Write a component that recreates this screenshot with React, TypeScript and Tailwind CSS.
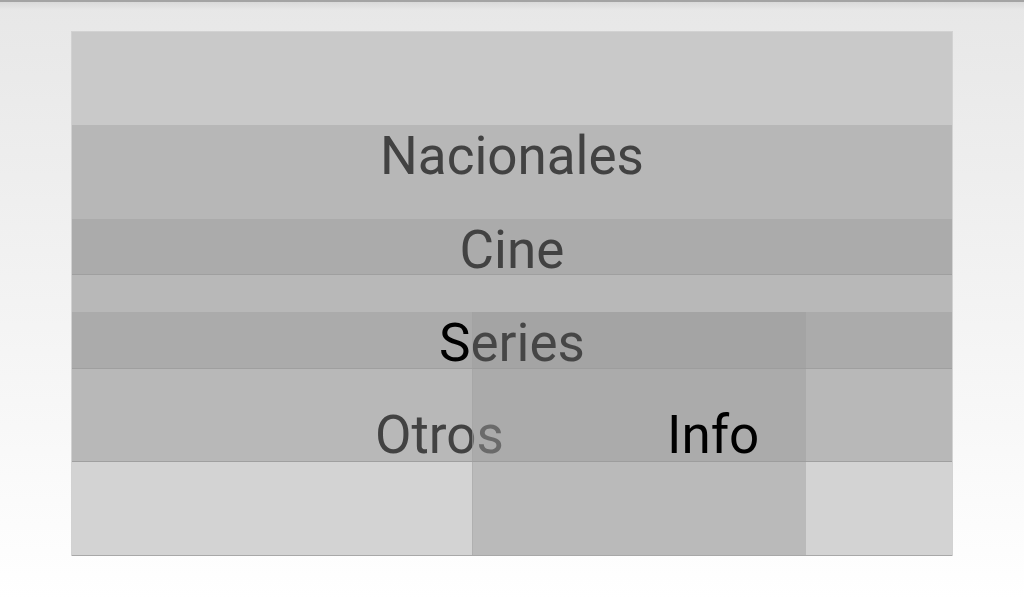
export default function App() {
  return (
    <div
      className="h-[600px] w-[1024px] overflow-hidden bg-gradient-to-b from-[#e7e7e7] to-[#ffffff]"
      style={{ fontFamily: 'Roboto, "Noto Sans", sans-serif' }}
    >
      {/* top edge shadow */}
      <div className="h-[2px] bg-[#a3a3a3]" />
      <div className="h-[8px] bg-gradient-to-b from-[#d9d9d9] to-[#e7e7e7]" />

      <div className="relative mx-auto mt-[21px] w-[882px] border-l border-r border-[#d2d2d2] text-[53px] leading-[63px] text-[#424242]">
        <div className="h-[94px] border-t border-[#d2d2d2] bg-[#c9c9c9]" />
        <div className="flex h-[94px] justify-center bg-[#b7b7b7]">
          <span>Nacionales</span>
        </div>
        <div className="flex h-[56px] justify-center border-b border-[#9f9f9f] bg-[#ababab]">
          <span>Cine</span>
        </div>
        <div className="h-[37px] bg-[#b8b8b8]" />
        <div className="flex h-[57px] justify-center border-b border-[#9f9f9f] bg-[#ababab]">
          <span className="text-black">Series</span>
        </div>
        <div className="h-[93px] border-b border-[#9f9f9f] bg-[#b8b8b8] pl-[303px] pt-[35px]">
          <span>Otros</span>
        </div>
        <div className="h-[94px] border-b border-[#a8a8a8] bg-[#d3d3d3]" />

        {/* info panel */}
        <div className="absolute left-[400px] top-[281px] h-[243px] w-[334px] border-l border-[#a2a2a2]/40 bg-[#9b9b9b]/45 pl-[194px] pt-[92px] text-black">
          <span>Info</span>
        </div>
      </div>
    </div>
  );
}
